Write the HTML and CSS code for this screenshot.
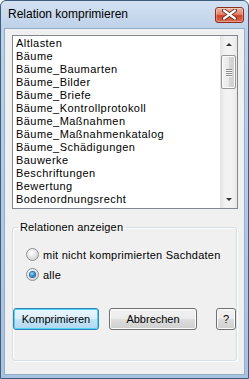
FILE: index.html
```html
<!DOCTYPE html>
<html lang="de">
<head>
    <meta charset="UTF-8">
    <title>Relation komprimieren</title>
    <link rel="stylesheet" href="styles.css">
</head>
<body>
    <div class="window">
        <div class="titlebar">
            <span class="title">Relation komprimieren</span>
            <span class="close">
                <svg width="15" height="11" viewBox="0 0 15 11">
                    <path d="M2 1.5 L13 9.5 M13 1.5 L2 9.5" stroke="#5a2418" stroke-width="4" stroke-linecap="round"/>
                    <path d="M2 1.5 L13 9.5 M13 1.5 L2 9.5" stroke="#ffffff" stroke-width="2.2" stroke-linecap="round"/>
                </svg>
            </span>
        </div>

        <div class="client">
            <div class="listbox">
                <ul class="items">
                    <li>Altlasten</li>
                    <li>Bäume</li>
                    <li>Bäume_Baumarten</li>
                    <li>Bäume_Bilder</li>
                    <li>Bäume_Briefe</li>
                    <li>Bäume_Kontrollprotokoll</li>
                    <li>Bäume_Maßnahmen</li>
                    <li>Bäume_Maßnahmenkatalog</li>
                    <li>Bäume_Schädigungen</li>
                    <li>Bauwerke</li>
                    <li>Beschriftungen</li>
                    <li>Bewertung</li>
                    <li>Bodenordnungsrecht</li>
                </ul>
                <div class="scrollbar">
                    <div class="arrow up"></div>
                    <div class="track">
                        <div class="thumb">
                            <span class="grip"></span>
                            <span class="grip"></span>
                            <span class="grip"></span>
                            <span class="grip"></span>
                        </div>
                    </div>
                    <div class="arrow down"></div>
                </div>
            </div>

            <fieldset class="group">
                <legend>Relationen anzeigen</legend>
                <div class="radio"><span class="circle"></span>mit nicht komprimierten Sachdaten</div>
                <div class="radio checked"><span class="circle"></span>alle</div>
                <div class="buttons">
                    <span class="btn default">Komprimieren</span>
                    <span class="btn cancel">Abbrechen</span>
                    <span class="btn help">?</span>
                </div>
            </fieldset>
        </div>
    </div>
</body>
</html>
```

FILE: styles.css
```css
* {
    box-sizing: border-box;
}
body {
    margin: 0;
    padding: 0;
    background: #ffffff;
    font-family: "Liberation Sans", Arial, sans-serif;
    font-size: 11px;
    color: #000000;
}
.window {
    width: 249px;
    height: 379px;
    display: flex;
    flex-direction: column;
    background: linear-gradient(#d3e1f1, #bcd0e8 30px, #a9c2df);
    border: 1px solid #3d5d80;
    border-radius: 6px 6px 0 0;
}
.titlebar {
    height: 27px;
    display: flex;
    align-items: center;
    justify-content: space-between;
    padding: 0 4px 2px 7px;
}
.title {
    font-size: 12px;
    color: #000000;
}
.close {
    width: 29px;
    height: 16px;
    display: flex;
    align-items: center;
    justify-content: center;
    margin-top: 2px;
    border: 1px solid #8a2f1f;
    border-radius: 3px;
    background: linear-gradient(#efb4a4, #e2826b 45%, #cc4128 55%, #dc7057);
    box-shadow: inset 0 0 0 1px rgba(255, 255, 255, 0.3);
}
.client {
    flex: 1;
    margin: 0 3px 3px 3px;
    background: #f0f0f0;
    border: 1px solid #93aecb;
    padding: 6px 7px 0 7px;
}
.listbox {
    width: 226px;
    height: 174px;
    display: flex;
    background: #ffffff;
    border: 1px solid #828790;
}
.items {
    flex: 1;
    list-style: none;
    margin: 0;
    padding: 1px 0 0 3px;
    line-height: 13px;
    letter-spacing: 0.45px;
    overflow: hidden;
}
.scrollbar {
    width: 17px;
    display: flex;
    flex-direction: column;
    background: linear-gradient(to right, #e3e3e3, #f2f2f2 30%, #f2f2f2 70%, #e8e8e8);
}
.arrow {
    height: 17px;
    display: flex;
    align-items: center;
    justify-content: center;
}
.arrow::before {
    content: "";
    border-left: 3px solid transparent;
    border-right: 3px solid transparent;
}
.arrow.up::before {
    border-bottom: 3px solid #333333;
}
.arrow.down::before {
    border-top: 3px solid #333333;
}
.track {
    flex: 1;
    padding: 2px 1px 0 1px;
}
.thumb {
    height: 34px;
    display: flex;
    flex-direction: column;
    align-items: center;
    justify-content: center;
    gap: 1px;
    border: 1px solid #979797;
    border-radius: 2px;
    background: linear-gradient(to right, #f4f4f4, #e8e8e8 50%, #d6d6d6 51%, #cfcfcf);
    box-shadow: inset 0 0 0 1px #fbfbfb;
}
.grip {
    width: 6px;
    height: 1px;
    background: #8a8a8a;
    box-shadow: 0 1px 0 #f8f8f8;
}
.group {
    width: 224px;
    margin: 12px 0 0 0;
    padding: 15px 0 30px 0;
    border: 1px solid #d5dfe5;
    border-radius: 3px;
    box-shadow: inset 1px 1px 0 #ffffff, 1px 1px 0 #ffffff;
}
.group legend {
    margin-left: 5px;
    padding: 0 2px;
    font-size: 11px;
    letter-spacing: 0.15px;
}
.radio {
    display: flex;
    align-items: center;
    height: 13px;
    margin: 0 0 7px 13px;
    letter-spacing: 0.25px;
}
.circle {
    width: 13px;
    height: 13px;
    margin-right: 4px;
    border-radius: 50%;
    border: 1px solid #8e8f8f;
    background: radial-gradient(circle at 40% 35%, #ffffff, #e6e6e6 45%, #c9c9c9);
    display: flex;
    align-items: center;
    justify-content: center;
}
.radio.checked .circle::after {
    content: "";
    width: 5px;
    height: 5px;
    border-radius: 50%;
    background: radial-gradient(circle at 40% 35%, #9fe3ff, #1b80c9 60%, #0e4f8a);
    box-shadow: 0 0 0 1px #2a6aa5;
}
.buttons {
    display: flex;
    align-items: center;
    margin-top: 27px;
}
.btn {
    height: 22px;
    display: flex;
    align-items: center;
    justify-content: center;
    border: 1px solid #707070;
    border-radius: 3px;
    background: linear-gradient(#f2f2f2, #ebebeb 50%, #dddddd 51%, #cfcfcf);
    box-shadow: inset 0 0 0 1px #fcfcfc;
}
.btn.default {
    width: 86px;
    border-color: #3c7fb1;
    background: linear-gradient(#e9f5fc, #dbeef9 50%, #c4e4f6 51%, #b1d8ef);
    box-shadow: inset 0 0 0 1px #48d6fb;
}
.btn.cancel {
    width: 88px;
    margin-left: 10px;
}
.btn.help {
    width: 20px;
    margin-left: 19px;
}
```
